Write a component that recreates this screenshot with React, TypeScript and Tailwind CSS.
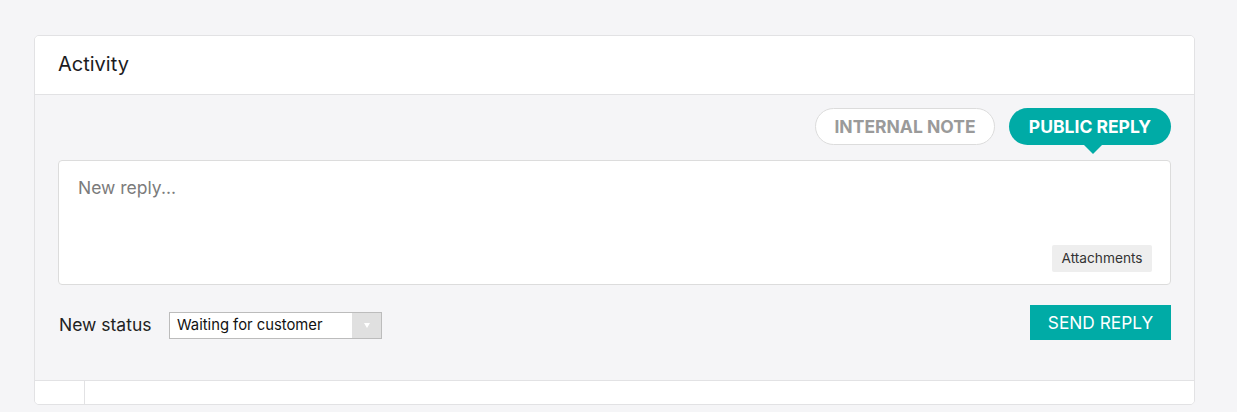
import React from "react";

export default function App() {
  return (
    <div className="min-h-[412px] bg-[#f5f5f7] pt-[35px] px-[34px] pr-[42px]" style={{ fontFamily: "Inter, 'Liberation Sans', sans-serif" }}>
      <div className="border border-[#e2e2e4] rounded-[5px] overflow-hidden bg-[#f5f5f7]">
        <div className="bg-white h-[59px] border-b border-[#e2e2e4] flex items-center px-[23px]">
          <span className="text-[20px] text-[#1c1c1e] -mt-[3px]">Activity</span>
        </div>
        <div className="px-[23px] pt-[13px] pb-[40px]">
          <div className="flex justify-end gap-[14px]">
            <button className="h-[37px] w-[180px] pt-[2px] rounded-full border border-[#dcdcdc] bg-white text-[17.5px] font-bold text-[#9a9a9a] uppercase">Internal note</button>
            <div className="relative">
              <button className="h-[37px] w-[162px] pt-[2px] rounded-full bg-[#00aba6] text-[17.5px] font-bold text-white uppercase">Public reply</button>
              <div className="absolute left-[74px] top-[36px] w-0 h-0 border-l-[10px] border-r-[10px] border-t-[10px] border-l-transparent border-r-transparent border-t-[#00aba6]" />
            </div>
          </div>
          <div className="mt-[15px] h-[125px] bg-white border border-[#dcdcdc] rounded-[4px] relative">
            <div className="absolute left-[19px] top-[14px] text-[17.5px] text-[#7b7b7b]">New reply...</div>
            <button className="absolute right-[18px] bottom-[12px] h-[27px] w-[100px] bg-[#eeeeee] rounded-[2px] text-[13.7px] text-[#333]">Attachments</button>
          </div>
          <div className="mt-[20px] flex items-center justify-between">
            <div className="flex items-center pt-[6px]">
              <span className="ml-[1px] text-[17.5px] text-[#222] w-[110px]">New status</span>
              <div className="w-[213px] h-[27px] border border-[#bcbcbc] bg-white flex items-center">
                <span className="flex-1 pl-[7px] text-[14.8px] text-[#111]">Waiting for customer</span>
                <div className="w-[29px] h-full bg-[#e0e0e0] flex items-center justify-center">
                  <div className="w-0 h-0 border-l-[3px] border-r-[3px] border-t-[5px] border-l-transparent border-r-transparent border-t-white" />
                </div>
              </div>
            </div>
            <button className="h-[35px] w-[141px] bg-[#00aba6] text-white text-[17.3px] uppercase">Send reply</button>
          </div>
        </div>
        <div className="bg-white h-[24px] border-t border-[#e2e2e4] flex">
          <div className="w-[50px] border-r border-[#e2e2e4]" />
        </div>
      </div>
    </div>
  );
}
